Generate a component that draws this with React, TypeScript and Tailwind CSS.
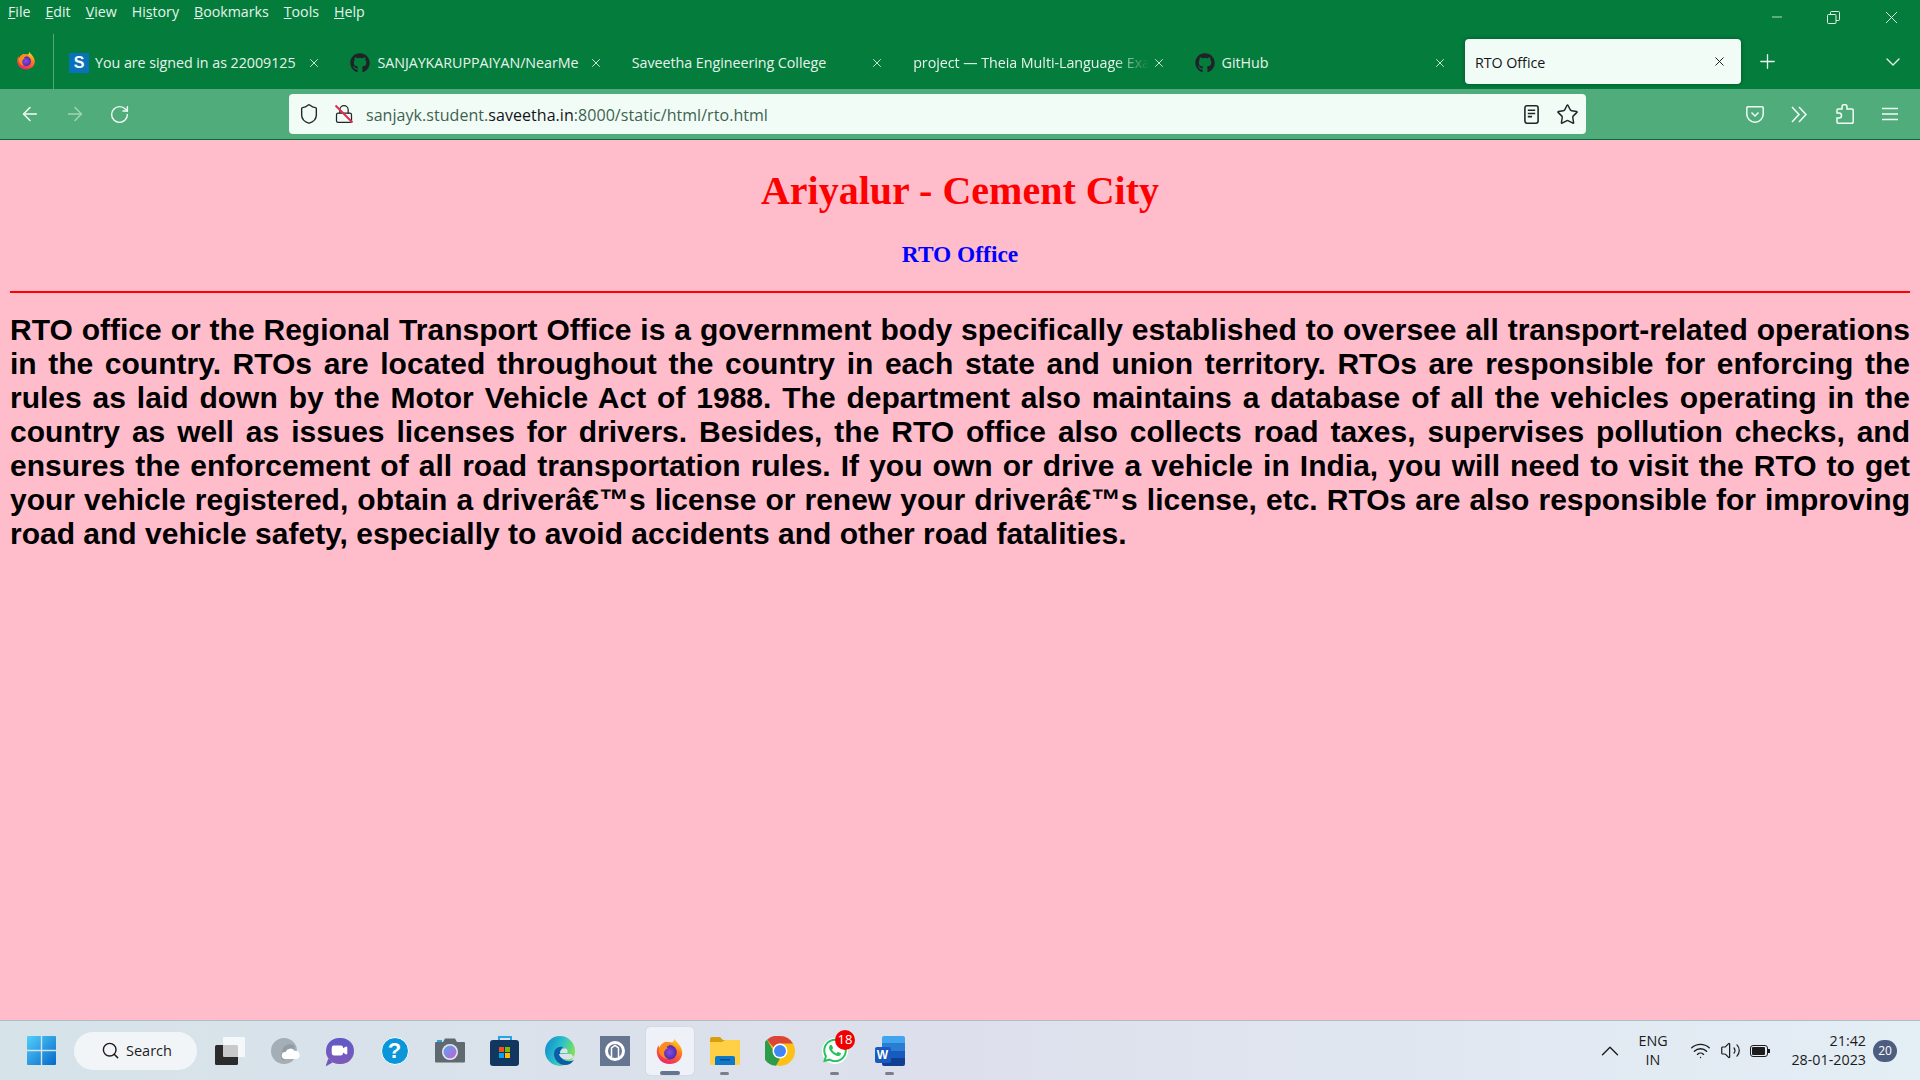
import { FaGithub, FaWhatsapp } from 'react-icons/fa';
import { ArrowLeft, ArrowRight, RotateCw, Shield, Lock, Star, Plus, ChevronDown, ChevronUp, X, Minus, Search, Wifi, Volume2, Video } from 'lucide-react';

const menus = [
    ['F', 'ile'],
    ['E', 'dit'],
    ['V', 'iew'],
    ['Hi', 's', 'tory'],
    ['B', 'ookmarks'],
    ['T', 'ools'],
    ['H', 'elp'],
];

const tabs = [
    { title: 'You are signed in as 22009125', icon: 's' },
    { title: 'SANJAYKARUPPAIYAN/NearMe', icon: 'gh' },
    { title: 'Saveetha Engineering College', icon: '' },
    { title: 'project \u2014 Theia Multi-Language Example', icon: '', fade: true },
    { title: 'GitHub', icon: 'gh' },
];

const badText =
    'RTO office or the Regional Transport Office is a government body specifically established to oversee all transport-related operations in the country. RTOs are located throughout the country in each state and union territory. RTOs are responsible for enforcing the rules as laid down by the Motor Vehicle Act of 1988. The department also maintains a database of all the vehicles operating in the country as well as issues licenses for drivers. Besides, the RTO office also collects road taxes, supervises pollution checks, and ensures the enforcement of all road transportation rules. If you own or drive a vehicle in India, you will need to visit the RTO to get your vehicle registered, obtain a driver\u00e2\u20ac\u2122s license or renew your driver\u00e2\u20ac\u2122s license, etc. RTOs are also responsible for improving road and vehicle safety, especially to avoid accidents and other road fatalities.';

function FirefoxLogo({ size, id }: { size: number; id: string }) {
    return (
        <svg width={size} height={size} viewBox="0 0 32 32">
            <defs>
                <linearGradient id={`${id}a`} x1="0.7" y1="0" x2="0.3" y2="1">
                    <stop offset="0" stopColor="#ffe226" />
                    <stop offset="0.45" stopColor="#ff7a1a" />
                    <stop offset="1" stopColor="#f01f6a" />
                </linearGradient>
                <radialGradient id={`${id}b`}>
                    <stop offset="0" stopColor="#8f4ce0" />
                    <stop offset="1" stopColor="#4a2bb0" />
                </radialGradient>
            </defs>
            <path d="M21 1c0 3 2.500 4.500 4.500 7 3 3.500 4.500 7 4.500 10.500C30 26 24 31 16 31 8 31 2 25 2 17.500c0-3 .8-5.500 1.800-7.500 0 1.500.7 2.500 1.500 3 .6-2.500 2.500-5 5-6 3-1.200 5 0 7 0 3.500 0 4.700-3 3.700-6z" fill={`url(#${id}a)`} />
            <circle cx="16" cy="18" r="8" fill={`url(#${id}b)`} />
            <path d="M5 13c1.500-4 6-6.500 10-6 3 .4 5 1.800 6 3.500-1.500-.8-3-1-4.500-.8-1 1-2.200 1.500-3.500 2 0 .8.300 1.300 1 1.800-2.500 1-4 3-4 5.500 0 3 2 5.500 5 6.500-5 0-9-3-10.500-7.500C4.200 16 4.500 14.500 5 13z" fill="#ff8a1e" />
        </svg>
    );
}

function WinLogo() {
    return (
        <svg width="29" height="29" viewBox="0 0 29 29">
            <defs>
                <linearGradient id="wing" x1="0" y1="0" x2="1" y2="1">
                    <stop offset="0" stopColor="#52cffb" />
                    <stop offset="1" stopColor="#0669c9" />
                </linearGradient>
            </defs>
            <path d="M1 0h12.800v13.800H0V1a1 1 0 0 1 1-1zM15.200 0H28a1 1 0 0 1 1 1v12.800H15.200zM0 15.200h13.800V29H1a1 1 0 0 1-1-1zM15.200 15.200H29V28a1 1 0 0 1-1 1H15.200z" fill="url(#wing)" />
        </svg>
    );
}

function TaskView() {
    return (
        <svg width="30" height="28" viewBox="0 0 30 28">
            <rect x="0" y="8" width="23" height="20" rx="1.500" fill="#2b2b2b" />
            <rect x="8" y="0" width="22" height="20" rx="1" fill="#fff" fillOpacity="0.75" />
        </svg>
    );
}

function CloudIcon() {
    return (
        <svg width="30" height="28" viewBox="0 0 30 28">
            <circle cx="14" cy="14" r="13" fill="#a4aeb7" />
            <path d="M14 24a6 6 0 0 1-2-9 8 8 0 0 1 13-6l-3 6H16z" fill="#6f7a84" fillOpacity="0.35" />
            <path d="M15 22a3.500 3.500 0 0 1 .5-7 5 5 0 0 1 9-1 4 4 0 0 1 2 8z" fill="#fff" />
        </svg>
    );
}

function MeetIcon() {
    return (
        <div className="relative flex h-[26px] w-[28px] items-center justify-center rounded-full bg-gradient-to-b from-[#5f58c8] to-[#7d5ab8]">
            <Video size={17} fill="#fff" stroke="#fff" />
            <div className="absolute bottom-[-3px] left-0 h-[8px] w-[7px] bg-[#7458b6] [clip-path:polygon(40%_0,100%_50%,0_100%)]" />
        </div>
    );
}

function HelpIcon() {
    return (
        <div className="flex h-[28px] w-[28px] items-center justify-center rounded-full border border-white bg-[#0a96d8] font-['Liberation_Sans',sans-serif] text-[22px] font-bold leading-none text-white">
            ?
        </div>
    );
}

function CameraIcon() {
    return (
        <svg width="30" height="25" viewBox="0 0 30 25">
            <defs>
                <linearGradient id="camg" x1="0" y1="0" x2="1" y2="1">
                    <stop offset="0" stopColor="#5aa7f0" />
                    <stop offset="1" stopColor="#c25fd8" />
                </linearGradient>
            </defs>
            <rect x="2" y="2" width="5" height="3" fill="#2ea0e0" />
            <path d="M1 4h7l2-3.500h10l2 3.500h7a1 1 0 0 1 1 1v18.500a1 1 0 0 1-1 1H1a1 1 0 0 1-1-1V5a1 1 0 0 1 1-1z" fill="#5f6970" />
            <circle cx="15" cy="14" r="8" fill="#e6e9ee" />
            <circle cx="15" cy="14" r="6.500" fill="url(#camg)" />
        </svg>
    );
}

function StoreIcon() {
    return (
        <svg width="30" height="31" viewBox="0 0 30 31">
            <path d="M9 6V2h12v4" fill="none" stroke="#2aa3e6" strokeWidth="2" />
            <rect x="0" y="5" width="29" height="26" rx="3" fill="#11365f" />
            <rect x="9" y="12" width="5" height="5" fill="#f25022" />
            <rect x="15" y="12" width="5" height="5" fill="#7fba00" />
            <rect x="9" y="18" width="5" height="5" fill="#00a4ef" />
            <rect x="15" y="18" width="5" height="5" fill="#ffb900" />
        </svg>
    );
}

function EdgeIcon() {
    return (
        <svg width="30" height="30" viewBox="0 0 30 30">
            <defs>
                <linearGradient id="edg" x1="0" y1="0" x2="1" y2="0.4">
                    <stop offset="0" stopColor="#0c84d2" />
                    <stop offset="0.6" stopColor="#2fc3c7" />
                    <stop offset="1" stopColor="#7ce05a" />
                </linearGradient>
            </defs>
            <circle cx="15" cy="15" r="15" fill="url(#edg)" />
            <path d="M18 11c-5-1-9 2-9 7 0 6 5 11 11 11 4 0 7-2 9-5-3 1.500-6 1.500-9 .5-3-1-4.500-3.500-4-6h-1c-.5-3 1-6 3-7.500z" fill="#0b5cab" />
            <path d="M15 17c0-3.500 3-5 5.500-4.500 1.800.4 2.500 2 2 4.500z" fill="#dde1ec" />
            <path d="M14 18c.5 3 3 5 7 5.500 3 .3 6-.5 8-2.500l-3-3z" fill="#dde1ec" />
        </svg>
    );
}

function TheiaIcon() {
    return (
        <div className="flex h-[30px] w-[30px] items-center justify-center bg-[#667691]">
            <svg width="20" height="20" viewBox="0 0 20 20" fill="none" stroke="#fff" strokeWidth="3">
                <circle cx="10" cy="10" r="8.500" />
                <path d="M6.500 16V7L10 4.500 13.500 7v9" strokeWidth="1.500" />
            </svg>
        </div>
    );
}

function FolderIcon() {
    return (
        <svg width="30" height="28" viewBox="0 0 30 28">
            <path d="M0 2a2 2 0 0 1 2-2h8l3 3h16a1 1 0 0 1 1 1v4H0z" fill="#d99e0b" />
            <path d="M0 5h12l3-2h14a1 1 0 0 1 1 1v23a1 1 0 0 1-1 1H1a1 1 0 0 1-1-1z" fill="#ffcf45" />
            <path d="M5 28v-7a2 2 0 0 1 2-2h16a2 2 0 0 1 2 2v7z" fill="#0f79c9" />
            <rect x="10" y="22" width="10" height="1.500" fill="#0a4f8a" />
        </svg>
    );
}

function ChromeIcon() {
    return (
        <svg width="30" height="30" viewBox="0 0 30 30">
            <circle cx="15" cy="15" r="15" fill="#fbc116" />
            <path d="M15 0a15 15 0 0 1 13 7.500H15a7.500 7.500 0 0 0-6.500 3.750L2 3.800A15 15 0 0 1 15 0z" fill="#db4437" />
            <path d="M2 3.800l6.500 11.200a7.500 7.500 0 0 0 6.500 7.500l-4 7.200A15 15 0 0 1 2 3.800z" fill="#2d9c4a" />
            <circle cx="15" cy="15" r="7.500" fill="#fff" />
            <circle cx="15" cy="15" r="6" fill="#4285f4" />
        </svg>
    );
}

function WordIcon() {
    return (
        <div className="relative h-[30px] w-[30px]">
            <div className="absolute right-0 top-0 flex h-[30px] w-[23px] flex-col overflow-hidden rounded-[2px]">
                <div className="flex-1 bg-[#41a5ee]" />
                <div className="flex-1 bg-[#2b7cd3]" />
                <div className="flex-1 bg-[#185abd]" />
                <div className="flex-1 bg-[#103f91]" />
            </div>
            <div className="absolute left-0 top-[11px] flex h-[16px] w-[16px] items-center justify-center rounded-[2px] bg-[#185abd] font-['Liberation_Sans',sans-serif] text-[12px] font-bold text-white">
                W
            </div>
        </div>
    );
}

function Dock({ children, mark }: { children: React.ReactNode; mark?: boolean }) {
    return (
        <div className="relative flex h-full w-[55px] items-center justify-center">
            {children}
            {mark && <div className="absolute bottom-[5px] h-[3px] w-[9px] rounded-full bg-[#7b8088]" />}
        </div>
    );
}

export default function App() {
    return (
        <div className="flex h-screen w-full flex-col overflow-hidden bg-[#ffbccb] font-['Open_Sans',sans-serif]">
            {/* window chrome */}
            <header className="bg-[#047c3c] text-[#e6f4ec]">
                <div className="flex h-[24px] items-center pl-[8px] text-[14.200px]">
                    <nav className="flex gap-[15px]">
                        {menus.map((m) => (
                            <span key={m.join('')} className="leading-none">
                                {m.length === 3 ? (
                                    <>
                                        {m[0]}
                                        <span className="underline">{m[1]}</span>
                                        {m[2]}
                                    </>
                                ) : (
                                    <>
                                        <span className="underline">{m[0]}</span>
                                        {m[1]}
                                    </>
                                )}
                            </span>
                        ))}
                    </nav>
                    <div className="ml-auto mt-[10px] flex items-center pr-[18px]">
                        <Minus size={16} strokeWidth={1.2} className="mr-[42px]" />
                        <svg width="13" height="13" viewBox="0 0 13 13" fill="none" stroke="currentColor" className="mr-[41px]">
                            <rect x="0.500" y="3.500" width="8.500" height="9" rx="1" />
                            <path d="M3.500 3.500V1.500a1 1 0 0 1 1-1h7a1 1 0 0 1 1 1v7a1 1 0 0 1-1 1H9" />
                        </svg>
                        <X size={21} strokeWidth={1.1} />
                    </div>
                </div>
                <div className="flex h-[65px] items-start">
                    <div className="mt-[10px] flex h-[55px] w-[54px] shrink-0 items-start justify-center border-r border-[#4fa878] pt-[16px] pr-[2px]">
                        <FirefoxLogo size={20} id="ffbar" />
                    </div>
                    <div className="flex h-[60px] shrink-0 pl-[3px]">
                        {tabs.map((t) => (
                            <div key={t.title} className="flex h-full w-[281.400px] items-center pt-[17px] pl-[12px] pr-[17px] text-[14.300px] tracking-[-0.05px]">
                                {t.icon === 's' && (
                                    <div className="mr-[6px] flex h-[20px] w-[20px] shrink-0 items-center justify-center bg-[#0a72ba] font-['Liberation_Sans',sans-serif] text-[16px] font-bold text-white">
                                        S
                                    </div>
                                )}
                                {t.icon === 'gh' && <FaGithub size={20} className="mr-[7px] shrink-0 text-[#1f2328]" />}
                                <span className={`min-w-0 flex-1 overflow-hidden whitespace-nowrap ${t.fade ? '[mask-image:linear-gradient(to_right,black_85%,transparent_100%)]' : ''}`}>
                                    {t.title}
                                </span>
                                <X size={14} strokeWidth={1.5} className="ml-[3px] shrink-0" />
                            </div>
                        ))}
                    </div>
                    <div className="ml-[1px] mt-[15px] flex h-[45px] w-[276px] shrink-0 items-center rounded-[4px] bg-[#f2fcf6] pl-[10px] pr-[14px] text-[14.300px] tracking-[-0.05px] text-[#15141a] shadow-[0_0_4px_rgba(0,0,0,0.35)]">
                        <span className="flex-1 pt-[2px]">RTO Office</span>
                        <X size={15} strokeWidth={1.5} />
                    </div>
                    <div className="mt-[15px] flex h-[45px] flex-1 items-center pl-[15px] pr-[15px]">
                        <Plus size={23} strokeWidth={1.4} />
                        <ChevronDown size={24} strokeWidth={1.4} className="ml-auto" />
                    </div>
                </div>
            </header>

            {/* nav bar */}
            <div className="flex h-[51px] items-start border-b border-[#0b6b38] bg-[#50ad7b] pt-[5px] text-[#f2fcf6]">
                <div className="flex h-[40px] w-[289px] shrink-0 items-center gap-[23px] pl-[19px]">
                    <ArrowLeft size={22} strokeWidth={1.6} />
                    <ArrowRight size={22} strokeWidth={1.6} className="text-[#9fd6b8]" />
                    <RotateCw size={21} strokeWidth={1.6} />
                </div>
                <div className="flex h-[40px] w-[1297px] shrink-0 items-center rounded-[4px] bg-[#f2fcf6] pl-[9px] pr-[7px] text-[#20262b]">
                    <Shield size={22} strokeWidth={1.5} />
                    <div className="relative ml-[14px] mr-[12px] flex items-center">
                        <Lock size={20} strokeWidth={1.5} />
                        <div className="absolute left-[9px] top-[-2px] h-[24px] w-[2px] -rotate-45 bg-[#e22850]" />
                    </div>
                    <span className="pt-[2px] text-[16px] tracking-[0.05px] text-[#3d6350]">
                        sanjayk.student.<span className="text-[#15141a]">saveetha.in</span>:8000/static/html/rto.html
                    </span>
                    <svg width="15" height="19" viewBox="0 0 14 18" fill="none" stroke="currentColor" strokeWidth="1.500" className="ml-auto mr-[17px]">
                        <rect x="0.750" y="0.750" width="12.500" height="16.500" rx="2" />
                        <path d="M3.500 5h7M3.500 8h7M3.500 11h4" />
                    </svg>
                    <Star size={23} strokeWidth={1.5} />
                </div>
                <div className="flex h-[40px] flex-1 items-center pl-[160px]">
                    <svg width="18" height="17" viewBox="0 0 18 17" fill="none" stroke="currentColor" strokeWidth="1.500" className="mr-[27px]">
                        <path d="M2 .800h14a1.200 1.200 0 0 1 1.200 1.200v6a8.200 8.200 0 0 1-16.400 0V2A1.200 1.200 0 0 1 2 .800z" />
                        <path d="M5.500 6.500L9 10l3.500-3.500" />
                    </svg>
                    <svg width="16" height="17" viewBox="0 0 16 17" fill="none" stroke="currentColor" strokeWidth="1.500" className="mr-[29px]">
                        <path d="M1 1l7 7.500L1 16M8 1l7 7.500L8 16" />
                    </svg>
                    <svg width="18" height="20" viewBox="0 0 18 20" fill="none" stroke="currentColor" strokeWidth="1.500" className="mr-[28px]">
                        <path d="M6 5V3a2.500 2.500 0 0 1 5 0v2h5a1.200 1.200 0 0 1 1.200 1.200V18a1.200 1.200 0 0 1-1.200 1.200H2a1 1 0 0 1-1-1V14h2a2.500 2.500 0 0 0 0-5H1V6.200A1.200 1.200 0 0 1 2.200 5z" />
                    </svg>
                    <svg width="16" height="14" viewBox="0 0 16 14" fill="none" stroke="currentColor" strokeWidth="1.500">
                        <path d="M0 1.500h16M0 7h16M0 12.500h16" />
                    </svg>
                </div>
            </div>

            {/* page */}
            <main className="min-h-0 flex-1 px-[10px] pt-[28px]">
                <h1 className="text-center font-['Liberation_Serif',serif] text-[40px] font-bold leading-[46px] text-[#ff0000]">Ariyalur - Cement City</h1>
                <h3 className="mt-[27px] text-center font-['Liberation_Serif',serif] text-[23.400px] font-bold leading-[27px] text-[#0000ff]">RTO Office</h3>
                <hr className="mt-[23px] border-t-2 border-[#ff0000]" />
                <p className="mt-[20px] text-justify font-['Liberation_Sans',sans-serif] text-[30px] font-bold leading-[34px] text-black">{badText}</p>
            </main>

            {/* taskbar */}
            <footer className="flex h-[60px] shrink-0 items-center border-t border-[#b2bcc4] bg-gradient-to-r from-[#d6e3e9] via-[#dde0ec] to-[#e4eef5] pl-[14px] text-[#1c1c1c]">
                <div className="flex w-[54px] justify-center">
                    <WinLogo />
                </div>
                <div className="ml-[6px] flex h-[38px] w-[123px] items-center justify-center gap-[6px] rounded-full bg-[#f2f5f8] pl-[2px] text-[14.500px]">
                    <Search size={19} strokeWidth={1.8} />
                    <span>Search</span>
                </div>
                <div className="ml-[5px] flex h-full items-center">
                    <Dock><TaskView /></Dock>
                    <Dock><CloudIcon /></Dock>
                    <Dock><MeetIcon /></Dock>
                    <Dock><HelpIcon /></Dock>
                    <Dock><CameraIcon /></Dock>
                    <Dock><StoreIcon /></Dock>
                    <Dock><EdgeIcon /></Dock>
                    <Dock><TheiaIcon /></Dock>
                    <div className="relative flex h-full w-[55px] items-center justify-center">
                        <div className="flex h-[48px] w-[48px] items-center justify-center rounded-[4px] bg-[#eef1f8] shadow-[0_0_1px_rgba(0,0,0,0.25)]">
                            <FirefoxLogo size={29} id="fftask" />
                        </div>
                        <div className="absolute bottom-[5px] h-[4px] w-[20px] rounded-full bg-[#66748f]" />
                    </div>
                    <Dock mark><FolderIcon /></Dock>
                    <Dock><ChromeIcon /></Dock>
                    <Dock mark>
                        <div className="flex h-[26px] w-[26px] items-center justify-center rounded-full bg-white">
                            <FaWhatsapp size={27} className="text-[#25c35f]" />
                        </div>
                        <div className="absolute left-[28px] top-[9px] flex h-[20px] w-[20px] items-center justify-center rounded-full bg-[#f00000] text-[13px] text-white">18</div>
                    </Dock>
                    <Dock mark><WordIcon /></Dock>
                </div>
                <div className="ml-auto flex h-full items-center pr-[23px]">
                    <ChevronUp size={30} strokeWidth={1.1} />
                    <div className="ml-[10px] flex w-[36px] flex-col items-center pb-[2px] text-[14.300px] leading-[19px]">
                        <span>ENG</span>
                        <span>IN</span>
                    </div>
                    <Wifi size={21} strokeWidth={1.6} className="ml-[19px]" />
                    <Volume2 size={21} strokeWidth={1.4} className="ml-[9px]" />
                    <div className="ml-[9px] flex items-center">
                        <div className="flex h-[12px] w-[18px] items-center rounded-[3px] border border-[#1c1c1c] p-[1px]">
                            <div className="h-full w-[13px] rounded-[1px] bg-[#1c1c1c]" />
                        </div>
                        <div className="h-[4px] w-[2px] bg-[#1c1c1c]" />
                    </div>
                    <div className="ml-[19px] flex w-[77px] flex-col items-end pb-[2px] text-[14.300px] leading-[19px]">
                        <span>21:42</span>
                        <span>28-01-2023</span>
                    </div>
                    <div className="ml-[7px] flex h-[22px] w-[24px] items-center justify-center rounded-full bg-[#4d5d80] text-[12px] text-white">20</div>
                </div>
            </footer>
        </div>
    );
}
